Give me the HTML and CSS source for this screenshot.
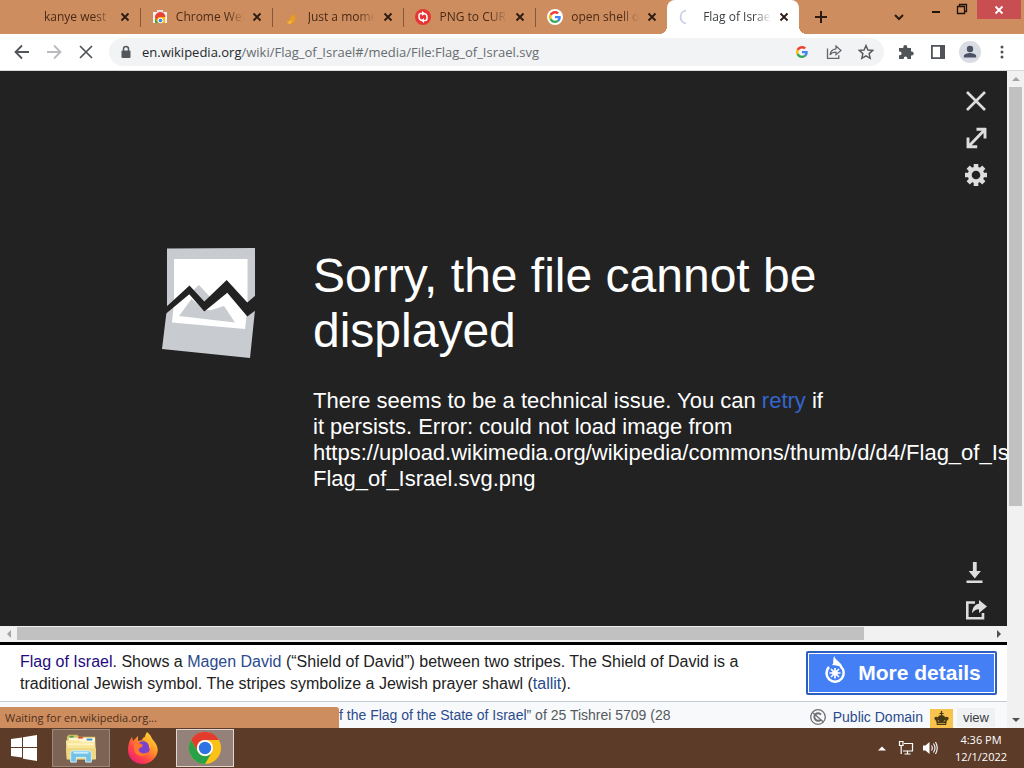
FILE: index.html
```html
<!DOCTYPE html>
<html lang="en">
<head>
<meta charset="utf-8">
<title>Flag of Israel</title>
<link rel="stylesheet" href="styles.css">
</head>
<body>
<svg class="defs" aria-hidden="true">
  <symbol id="x" viewBox="0 0 10 10"><path d="M1.500 1.500l7 7M8.500 1.500l-7 7" fill="none" stroke="currentColor" stroke-width="1.800"/></symbol>
  <symbol id="google" viewBox="0 0 48 48">
    <path fill="#ea4335" d="M24 9.500c3.500 0 6.700 1.200 9.200 3.600l6.900-6.900C35.900 2.400 30.500 0 24 0 14.600 0 6.500 5.400 2.600 13.200l8 6.200C12.400 13.700 17.700 9.500 24 9.500z"/>
    <path fill="#4285f4" d="M47 24.500c0-1.600-.2-3.100-.4-4.500H24v9h12.900c-.6 3-2.300 5.500-4.800 7.200l7.700 6C44.400 38 47 31.800 47 24.500z"/>
    <path fill="#fbbc05" d="M10.500 28.600a14.500 14.500 0 0 1 0-9.200l-8-6.200a24 24 0 0 0 0 21.600z"/>
    <path fill="#34a853" d="M24 48c6.500 0 11.900-2.100 15.900-5.800l-7.700-6c-2.200 1.500-4.900 2.300-8.200 2.300-6.300 0-11.600-4.200-13.500-9.900l-8 6.200C6.500 42.600 14.600 48 24 48z"/>
  </symbol>
</svg>

<header class="tabstrip">
  <nav class="tabs" aria-label="Tabs">
    <div class="tab"><span class="favicon"></span><span class="tab-title">kanye west - Google</span><button class="tab-close" aria-label="Close tab"><svg><use href="#x"/></svg></button></div>
    <div class="tab"><span class="favicon"><svg viewBox="0 0 16 16"><path d="M1 3h14v11H1z" fill="#f4f0f0"/><path d="M5 1h6v2H5z" fill="#e9e4e4"/><path d="M3 14V9a5 5 0 0 1 10 0v5z" fill="#fbbc05"/><path d="M3 8.500a5 5 0 0 1 10.500-.5H8a3 3 0 0 0-3 4z" fill="#ea4335"/><path d="M3 9l3 5H3z" fill="#34a853"/><circle cx="8.500" cy="11.500" r="2.300" fill="#4285f4" stroke="#fff"/></svg></span><span class="tab-title">Chrome Web Store</span><button class="tab-close" aria-label="Close tab"><svg><use href="#x"/></svg></button></div>
    <div class="tab"><span class="favicon"><svg viewBox="0 0 16 16"><path d="M9 1c1 2-1 4 0 6l1-2c2 3 2 7-1 9-3 2-6 1-7-1 3 0 4-1 4-4 1-2 4-4 3-8z" fill="#e99a20"/><path d="M3 12c2 1 4 0 5-2 0 3-1 5-3 5z" fill="#f6b63a"/></svg></span><span class="tab-title">Just a moment...</span><button class="tab-close" aria-label="Close tab"><svg><use href="#x"/></svg></button></div>
    <div class="tab"><span class="favicon"><svg viewBox="0 0 16 16"><circle cx="8" cy="8" r="8" fill="#e73535"/><path d="M7.500 4.500H6a2 2 0 0 0-2 2V8a3.500 3.500 0 0 0 3 3.400M8.500 11.500H10a2 2 0 0 0 2-2V8a3.500 3.500 0 0 0-3-3.400" fill="none" stroke="#fff" stroke-width="1.500"/><path d="M7 2l3 2.600L7 7zM9 9v5l-3-2.600z" fill="#fff"/></svg></span><span class="tab-title">PNG to CUR Converter</span><button class="tab-close" aria-label="Close tab"><svg><use href="#x"/></svg></button></div>
    <div class="tab"><span class="favicon favicon-disc"><svg><use href="#google"/></svg></span><span class="tab-title">open shell or classic</span><button class="tab-close" aria-label="Close tab"><svg><use href="#x"/></svg></button></div>
    <div class="tab tab-active"><span class="favicon"><svg viewBox="0 0 16 16"><path d="M7 1.500a6.600 6.600 0 0 0 0 13" fill="none" stroke="#c6cee6" stroke-width="1.700"/></svg></span><span class="tab-title">Flag of Israel - Wikipedia</span><button class="tab-close" aria-label="Close tab"><svg><use href="#x"/></svg></button></div>
  </nav>
  <button class="new-tab" aria-label="New tab"><svg viewBox="0 0 14 14"><path d="M7 1v12M1 7h12" stroke="#2d1a10" stroke-width="2"/></svg></button>
  <div class="window-controls">
    <button class="search-tabs" aria-label="Search tabs"><svg viewBox="0 0 12 12"><path d="M2 4l4 4 4-4" fill="none" stroke="#2d1a10" stroke-width="2"/></svg></button>
    <button class="win-btn" aria-label="Minimize"><svg viewBox="0 0 12 12"><path d="M2 9h8" stroke="#1d120c" stroke-width="2"/></svg></button>
    <button class="win-btn" aria-label="Restore"><svg viewBox="0 0 12 12"><path d="M1.500 3.500h7v7h-7zM3.500 3V1.500h7v7H9" fill="none" stroke="#1d120c" stroke-width="1.300"/></svg></button>
    <button class="win-close" aria-label="Close window"><svg><use href="#x"/></svg></button>
  </div>
</header>

<div class="toolbar">
  <div class="nav-buttons">
    <button aria-label="Back"><svg viewBox="0 0 16 16"><path d="M15 8H2M8 1.500L1.500 8 8 14.500" fill="none" stroke="#505357" stroke-width="1.800"/></svg></button>
    <button aria-label="Forward"><svg viewBox="0 0 16 16"><path d="M1 8h13M8 1.500L14.500 8 8 14.500" fill="none" stroke="#b8babd" stroke-width="1.800"/></svg></button>
    <button aria-label="Stop"><svg viewBox="0 0 16 16"><path d="M2 2l12 12M14 2L2 14" stroke="#505357" stroke-width="1.700"/></svg></button>
  </div>
  <div class="omnibox">
    <svg class="lock" viewBox="0 0 10 14"><path d="M2.500 6V4a2.500 2.500 0 0 1 5 0v2" fill="none" stroke="#54575b" stroke-width="1.500"/><rect x="0.500" y="5.500" width="9" height="7.500" rx="1" fill="#54575b"/></svg>
    <a class="url" href="#"><span class="host">en.wikipedia.org</span>/wiki/Flag_of_Israel#/media/File:Flag_of_Israel.svg</a>
    <div class="omni-actions">
      <button aria-label="Search with Google"><svg class="g-small"><use href="#google"/></svg></button>
      <button aria-label="Share"><svg viewBox="0 0 16 16"><path d="M1.500 4.500v9.800h11.300v-3" fill="none" stroke="#63666a" stroke-width="1.300"/><path d="M10 2l5 4.500-5 4.300V8.200c-3 0-4.700.8-6 2.600.4-3.300 2.400-5.500 6-6z" fill="none" stroke="#63666a" stroke-width="1.200"/></svg></button>
      <button aria-label="Bookmark"><svg viewBox="0 0 16 16"><path d="M8 1.500l1.900 4.500 4.900.4-3.700 3.200 1.100 4.800L8 11.900l-4.200 2.500 1.100-4.800L1.200 6.400l4.900-.4z" fill="none" stroke="#55585c" stroke-width="1.400"/></svg></button>
    </div>
  </div>
  <div class="extras">
    <button aria-label="Extensions"><svg viewBox="0 0 16 16"><path d="M1 4h4.300V3a2 2 0 0 1 4 0v1H13v3.600h.7a2 2 0 0 1 0 4H13V15H9.400v-.8a1.800 1.800 0 0 0-3.600 0v.8H1v-3.800h.8a1.800 1.800 0 0 0 0-3.600H1z" fill="#505357"/></svg></button>
    <button aria-label="Side panel"><svg viewBox="0 0 16 16"><path d="M1.900 1.900h12.200v12.200H1.900z" fill="none" stroke="#505357" stroke-width="1.800"/><path d="M10 2h5v12h-5z" fill="#505357"/></svg></button>
    <button class="profile" aria-label="Profile"><svg viewBox="0 0 16 16"><circle cx="8" cy="5" r="3.200" fill="#4b5166"/><path d="M1.800 13.500V12c0-2 4-3 6.200-3s6.200 1 6.200 3v1.500z" fill="#4b5166"/></svg></button>
    <button aria-label="Menu"><svg viewBox="0 0 16 16" fill="#505357"><circle cx="8" cy="3" r="1.500"/><circle cx="8" cy="8" r="1.500"/><circle cx="8" cy="13" r="1.500"/></svg></button>
  </div>
</div>

<div class="page">
  <main class="viewer">
    <section class="stage">
      <div class="error">
        <svg class="error-art" viewBox="0 0 94 110">
          <path d="M5 0.500L93 0V62L88 110 0 101 5 60z" fill="#c8ccd1"/>
          <path d="M12 11H85.500V60L83 81 10 74.500 12 55z" fill="#fff"/>
          <path d="M37 37L49 50 42 58 29 44z" fill="#c8ccd1"/>
          <path d="M17 68L29.500 51 42 62 49.500 62 62 58 73 74.500z" fill="#c8ccd1"/>
          <path d="M3 60L27.500 37.500 42.300 53.500 64.700 32 85.300 54.500 94 47V62L85.300 68.500 65.300 44.700 42.300 63.500 27.300 46.300 3 66.500z" fill="#222"/>
        </svg>
        <div class="error-text">
          <h1>Sorry, the file cannot be displayed</h1>
          <p>There seems to be a technical issue. You can <a href="#">retry</a> if it persists. Error: could not load image from https://upload.wikimedia.org/wikipedia/commons/thumb/d/d4/Flag_of_Israel.svg/1024px-Flag_of_Israel.svg.png</p>
        </div>
      </div>
      <div class="tools">
        <div class="tool-group">
          <button aria-label="Close viewer"><svg viewBox="0 0 22 22"><path d="M2 2l18 18M20 2L2 20" stroke="#ddd" stroke-width="2.600"/></svg></button>
          <button aria-label="Full screen"><svg viewBox="0 0 22 22"><path d="M11.500 2.200H21M20 1v10.500M3 10.500V21M1.700 19.800h10.500M4 19L19 3.500" stroke="#ddd" stroke-width="2.900" fill="none"/></svg></button>
          <button aria-label="Settings"><svg viewBox="0 0 22 22"><circle cx="11" cy="11" r="6.300" fill="none" stroke="#ddd" stroke-width="4"/><g stroke="#ddd" stroke-width="4.600"><path d="M11 0v4M11 18v4M0 11h4M18 11h4M3.200 3.200L6 6M16 16l2.800 2.800M18.800 3.200L16 6M6 16l-2.800 2.800"/></g></svg></button>
        </div>
        <div class="tool-group">
          <button aria-label="Download"><svg viewBox="0 0 22 22"><path d="M7.900 0h3.800v9h4.200l-6.100 7.500L3.700 9h4.200zM1.500 18.500h16V21h-16z" fill="#ddd"/></svg></button>
          <button aria-label="Share file"><svg viewBox="0 0 22 22"><path d="M10 3.500H2.300v15.700H18V14" fill="none" stroke="#ddd" stroke-width="2.600"/><path d="M14 1l8 6.500-8 6.500v-3.800c-3 0-5 1.300-7 4 .3-5.500 3-9 7-9.400z" fill="#ddd"/></svg></button>
        </div>
      </div>
    </section>
    <div class="hscroll" aria-hidden="true">
      <span class="arrow"><svg viewBox="0 0 8 8"><path d="M6 0v8L2 4z" fill="#a3a3a3"/></svg></span>
      <span class="htrack"><span class="hthumb"></span></span>
      <span class="arrow"><svg viewBox="0 0 8 8"><path d="M2 0v8l4-4z" fill="#505050"/></svg></span>
    </div>
    <section class="details">
      <p class="caption"><a class="visited" href="#">Flag of Israel</a>. Shows a <a href="#">Magen David</a> (“Shield of David”) between two stripes. The Shield of David is a traditional Jewish symbol. The stripes symbolize a Jewish prayer shawl (<a href="#">tallit</a>).</p>
      <button class="more"><svg viewBox="0 0 22 28"><path d="M16.500 10.400a8.600 8.600 0 1 1-11.500.6" fill="none" stroke="#fff" stroke-width="2.500"/><path d="M10.500 0c0 4 6.500 5.500 8.300 11.500L12.500 9.500 8 9C10.500 7.500 8 3 10.500 0z" fill="#fff"/><circle cx="11" cy="17" r="3" fill="#fff"/><path d="M11 12v2M11 20v2.500M5.500 17h2.500M14 17h2.500M7 13l2 2M13 19l2 2M15 13l-2 2M9 19l-2 2" stroke="#fff" stroke-width="1.700"/></svg>More details</button>
    </section>
    <footer class="credit">
      <div class="status" role="status">Waiting for en.wikipedia.org...</div>
      <p class="source"><a href="#">f the Flag of the State of Israel</a>” of 25 Tishrei 5709 (28</p>
      <div class="license">
        <svg class="pd" viewBox="0 0 16 16" fill="none" stroke="#6c6f73"><circle cx="8" cy="8" r="7.300" stroke-width="1.300"/><path d="M11 5.500a3.800 3.800 0 1 0 0 5" stroke-width="1.900"/><path d="M2.500 3.500l11 9.500" stroke-width="1.300"/></svg>
        <a href="#">Public Domain</a>
        <span class="insignia"><svg viewBox="0 0 16 16" fill="#463714"><path d="M7.300 0h1.400v2h1.500v1.200H8.700v1.300C11 4.500 12 6 11.500 7c2.500-2 4.500-.5 4 1.500L13.500 11l-.5 4H3l-.5-4L.5 8.500C0 6.500 2 5 4.500 7 4 6 5 4.500 7.300 4.500V3.200H5.800V2h1.500z"/><path d="M4 9.500l1.500 2M12 9.500l-1.500 2M4 13.300h8" stroke="#f8c34c" stroke-width=".8"/></svg></span>
        <button class="view">view</button>
      </div>
    </footer>
  </main>
  <div class="vscroll" aria-hidden="true">
    <span class="arrow"><svg viewBox="0 0 8 8"><path d="M0 6h8L4 2z" fill="#a3a3a3"/></svg></span>
    <span class="vtrack"><span class="vthumb"></span></span>
    <span class="arrow"><svg viewBox="0 0 8 8"><path d="M0 2h8L4 6z" fill="#505050"/></svg></span>
  </div>
</div>

<footer class="taskbar">
  <button class="start" aria-label="Start"><svg viewBox="0 0 26 26" fill="#fff"><path d="M0 4l11-1.500V12H0zM12 2.300L26 0v12H12zM0 13h11v9.500L0 21zM12 13h14v13l-14-2.300z"/></svg></button>
  <button class="task task-open" aria-label="File Explorer"><svg viewBox="0 0 34 32">
    <path d="M2 4l2-2h9l2 2h17v24H2z" fill="#d9bd64"/><path d="M4 5h28v12H4z" fill="#fff6cf"/><path d="M5 3h4v2H5z" fill="#38a852"/><path d="M14 4h5v2h-5z" fill="#d34f3a"/><path d="M23 6h6v2h-6z" fill="#3a8fd6"/>
    <path d="M1 8h14l3 2h14l1 18H2z" fill="#f9e596"/><path d="M1 16h32l-1 12H2z" fill="#f0d880"/><path d="M3 12h28" stroke="#fff4c0" stroke-width="2"/>
    <path d="M6 31V22q0-3 3-3h16q3 0 3 3v9h-6v-5H12v5z" fill="#74c1e6" stroke="#d6f2ff"/><path d="M9 21h16" stroke="#c8efff" stroke-width="2"/></svg></button>
  <button class="task" aria-label="Firefox"><svg viewBox="0 0 32 32">
    <defs><linearGradient id="fx" x1="1" y1="0" x2=".2" y2="1"><stop offset="0" stop-color="#fff04a"/><stop offset=".4" stop-color="#ff9b25"/><stop offset=".72" stop-color="#ff4547"/><stop offset="1" stop-color="#ee1c78"/></linearGradient></defs>
    <path d="M20 0c5 4 4 6 7 9 4 5 5 10 2 15-3 5-8 8-13 8C7 32 1 26 1 18c0-5 1-9 4-13l1 4 5-5 0 5c3-1 6 0 7 0-1-3 0-6 2-9z" fill="url(#fx)"/>
    <circle cx="16" cy="16" r="6.800" fill="#7a42cf"/><path d="M7 12c3-2 6-1 9 1l-1 2c-3 1-4 2-3 4 2 3 6 3 9 1-2 4-5 5-8 4-5-1-7-6-6-12z" fill="#ff762f"/><path d="M14 9c5-2 9 3 8 8 4-4 1-11-5-12z" fill="#ffb52c"/></svg></button>
  <button class="task task-active" aria-label="Chrome"><svg viewBox="0 0 32 32">
    <circle cx="16" cy="16" r="16" fill="#fbc117"/><path d="M2.100 8A16 16 0 0 1 29.900 8H16a8 8 0 0 0-7 12z" fill="#e33b2e"/><path d="M2.100 8A16 16 0 0 0 16 32l7-12a8 8 0 0 1-14 0z" fill="#28a148"/>
    <circle cx="16" cy="16" r="8" fill="#fff"/><circle cx="16" cy="16" r="6.200" fill="#2f72e4"/></svg></button>
  <div class="tray">
    <button aria-label="Show hidden icons"><svg viewBox="0 0 16 16"><path d="M4 10.500L8 6.500l4 4z" fill="#fff"/></svg></button>
    <button aria-label="Network"><svg viewBox="0 0 16 16" fill="none" stroke="#fff" stroke-width="1.200"><path d="M6 3.500h8.500v7.500H5M9.500 11v2.500M6.500 14h6M1.500 1.500h3.500v4H1.500zM3.200 5.500V14"/></svg></button>
    <button aria-label="Volume"><svg viewBox="0 0 16 16"><path d="M1 5.500h2.500L7.500 2v12l-4-3.500H1z" fill="#fff"/><path d="M9.500 5.500q1.700 2.500 0 5M11.500 3.500q3 4.500 0 9M13.500 2q3.500 6 0 12" fill="none" stroke="#fff" stroke-width="1.100"/></svg></button>
  </div>
  <div class="clock"><time>4:36 PM</time><time>12/1/2022</time></div>
</footer>
</body>
</html>
```
FILE: styles.css
```css
* { box-sizing: border-box; }
body {
  margin: 0;
  height: 100vh;
  display: flex;
  flex-direction: column;
  overflow: hidden;
  font-family: "Open Sans", "Noto Sans", sans-serif;
  font-size: 12px;
  color: #222;
}
button {
  margin: 0; padding: 0; border: 0;
  background: none;
  color: inherit; font: inherit;
  display: flex; align-items: center; justify-content: center;
}
h1, p { margin: 0; }
a { text-decoration: none; }
svg { display: block; flex: none; }
.defs { position: absolute; width: 0; height: 0; }

/* Tab strip */
.tabstrip { display: flex; height: 34px; flex: none; background: #cd8d5e; color: #4a2a18; }
.tabs { display: flex; padding-left: 8px; flex: 0 1 799px; min-width: 0; }
.tab {
  flex: 1 1 0; min-width: 0;
  display: flex; align-items: center; gap: 8px;
  padding: 0 10px 0 12px;
  position: relative;
}
.tab:not(:nth-last-child(-n+2))::after {
  content: ""; position: absolute; right: -1px; top: 8px;
  width: 1px; height: 19px; background: #85583a;
}
.favicon { width: 16px; height: 16px; flex: none; }
.favicon svg { width: 16px; height: 16px; }
.favicon-disc { background: #fff; border-radius: 50%; padding: 2px; }
.favicon-disc svg { width: 12px; height: 12px; }
.tab-title {
  flex: 1; min-width: 0;
  overflow: hidden; white-space: nowrap;
  line-height: 20px;
  -webkit-mask-image: linear-gradient(to right, #000 75%, transparent);
  mask-image: linear-gradient(to right, #000 75%, transparent);
}
.tab-close { color: #2b1b12; }
.tab-close svg { width: 10px; height: 10px; }
.tab-active { background: #fff; border-radius: 8px 8px 0 0; color: #3c4043; }
.tab-active::before {
  content: ""; position: absolute; left: -8px; right: -8px; bottom: 0; height: 8px;
  background:
    radial-gradient(circle at 0 0, transparent 8px, #fff 8px) left / 8px 8px no-repeat,
    radial-gradient(circle at 100% 0, transparent 8px, #fff 8px) right / 8px 8px no-repeat;
}
.new-tab { width: 28px; margin-left: 8px; }
.new-tab svg { width: 14px; height: 14px; }
.window-controls { display: flex; align-items: flex-start; margin-left: auto; padding-right: 3px; }
.search-tabs { width: 34px; height: 34px; margin-right: 7px; }
.search-tabs svg, .win-btn svg { width: 12px; height: 12px; }
.win-btn { width: 26px; height: 18px; }
.win-close { width: 44px; height: 19px; margin-left: 2px; background: #c84e52; color: #fff; }
.win-close svg { width: 10px; height: 10px; }

/* Toolbar */
.toolbar { display: flex; align-items: center; height: 37px; flex: none; padding: 0 6px; background: #fff; border-bottom: 1px solid #d8d8d8; }
.nav-buttons, .omni-actions, .extras { display: flex; flex: none; }
.toolbar button { width: 32px; height: 28px; }
.toolbar button svg { width: 16px; height: 16px; }
.toolbar button .g-small { width: 12px; height: 12px; }
.omnibox { flex: 1; min-width: 0; display: flex; align-items: center; height: 28px; margin: 0 6px 0 7px; padding: 0 2px 0 12px; border-radius: 14px; background: #f1f3f4; }
.lock { width: 10px; height: 14px; margin-right: 11px; }
.url { flex: 1; min-width: 0; overflow: hidden; white-space: nowrap; font-size: 13px; line-height: 20px; color: #686c70; }
.host { color: #26282b; }
.toolbar .profile { width: 22px; height: 22px; margin: 3px 5px; border-radius: 50%; background: #dadce3; }

/* Page */
.page { display: flex; flex: 1; min-height: 0; background: #fff; }
.viewer { flex: 1; min-width: 0; display: flex; flex-direction: column; font-family: "Liberation Sans", Arial, sans-serif; }
.stage { flex: 1; min-height: 0; display: flex; justify-content: space-between; overflow: hidden; background: #222; color: #fff; }
.error { display: flex; align-items: flex-start; gap: 57px; padding: 177px 0 0 162px; min-width: 0; }
.error-art { width: 94px; height: 110px; }
.error-text { flex: 0 1 516px; min-width: 0; }
.error h1 { font-size: 48px; line-height: 55px; font-weight: 400; margin-bottom: 30px; }
.error p { font-size: 22px; line-height: 26px; }
.error a { color: #3366cc; }
.tools { flex: none; display: flex; flex-direction: column; justify-content: space-between; padding: 14px 15px 0 0; }
.tool-group { display: flex; flex-direction: column; gap: 5px; }
.tools button { width: 32px; height: 32px; }
.tools svg { width: 22px; height: 22px; }

/* Scroll bars */
.hscroll { display: flex; flex: none; height: 16px; background: #f1f1f1; }
.arrow { width: 17px; height: 16px; flex: none; display: flex; align-items: center; justify-content: center; }
.arrow svg { width: 8px; height: 8px; }
.htrack { flex: 1; padding: 1px 0 2px; }
.hthumb { display: block; width: 87%; height: 13px; background: #c1c1c1; }
.vscroll { width: 17px; flex: none; display: flex; flex-direction: column; background: #f1f1f1; }
.vtrack { flex: 1; padding: 0 2px; }
.vthumb { display: block; height: 67%; background: #c1c1c1; }

/* File details */
.details { display: flex; align-items: center; justify-content: space-between; flex: none; border-top: 3px solid #000; padding: 6px 10px 6px 20px; }
.details a, .credit a { color: #2a4b8d; }
.details .visited { color: #240a80; }
.caption { flex: 0 1 740px; font-size: 16px; line-height: 22px; }
.more { width: 191px; height: 44px; gap: 12px; padding-left: 2px; border: 2px solid #2d5fc0; border-radius: 2px; box-shadow: inset 0 0 0 1px #fff; background: #447ff5; color: #fff; font-size: 21px; font-weight: 700; }
.more svg { width: 22px; height: 28px; margin-bottom: 6px; }
.credit { display: flex; align-items: flex-end; flex: none; height: 27px; border-top: 1px solid #c8ccd1; background: #f8f9fa; font-size: 14px; color: #54595d; }
.status { flex: 0 0 339px; height: 21px; padding-left: 5px; border-radius: 0 3px 0 0; background: #cd8d5e; color: #4f2e1b; font: 11px/21px "Open Sans", "Noto Sans", sans-serif; }
.source { align-self: center; white-space: nowrap; }
.license { display: flex; align-items: center; align-self: stretch; margin-left: auto; padding: 4px 12px 0 0; }
.pd { width: 16px; height: 16px; margin-right: 7px; }
.insignia { width: 23px; height: 19px; margin: 0 4px 0 7px; padding: 2px 4px; background: #f8c34c; align-self: flex-end; }
.insignia svg { width: 15px; height: 15px; }
.view { height: 19px; padding: 0 6px; background: #f0f1f3; color: #3a3d40; font-size: 13px; }

/* Taskbar */
.taskbar { display: flex; align-items: center; flex: none; height: 40px; background: #5c3c29; color: #fff; }
.start { width: 48px; height: 40px; }
.start svg { width: 26px; height: 26px; }
.task { width: 58px; height: 38px; margin-left: 4px; border: 1px solid transparent; }
.task svg { width: 32px; height: 32px; }
.task-open { background: #7d6353; border-color: #9d897c; }
.task-active { background: #94827a; border-color: #e0d6cf; }
.tray { display: flex; margin-left: auto; }
.tray button { width: 24px; height: 24px; }
.tray svg { width: 16px; height: 16px; }
.clock { display: flex; flex-direction: column; width: 82px; padding-right: 4px; align-items: center; line-height: 17px; font-size: 11px; }
```
